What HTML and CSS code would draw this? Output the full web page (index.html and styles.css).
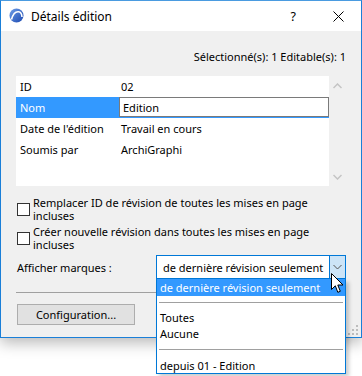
FILE: index.html
```html
<!DOCTYPE html>
<html lang="fr">
<head>
  <meta charset="UTF-8" />
  <title>Détails édition</title>
  <link rel="stylesheet" href="styles.css">
</head>
<body>
  <div class="window">
    <div class="titlebar">
      <svg class="app-icon" width="15" height="15" viewBox="0 0 15 15">
        <defs>
          <linearGradient id="ball" x1="0" y1="0" x2="1" y2="1">
            <stop offset="0" stop-color="#6f9ee8"/>
            <stop offset="1" stop-color="#1c49b0"/>
          </linearGradient>
        </defs>
        <circle cx="7.5" cy="7.5" r="7" fill="url(#ball)"/>
        <path d="M2.5 11.5 C4 6 7 3.5 9.5 3.8 C11.5 4 12.8 6 13 9" fill="none" stroke="#ffffff" stroke-width="1.6"/>
      </svg>
      <span class="title">Détails édition</span>
      <span class="help">?</span>
      <svg class="close" width="11" height="11" viewBox="0 0 11 11">
        <path d="M0.5 0.5 L10.5 10.5 M10.5 0.5 L0.5 10.5" stroke="#000" stroke-width="1"/>
      </svg>
    </div>

    <div class="content">
      <div class="stats">Sélectionné(s): 1 Editable(s): 1</div>

      <div class="listbox">
        <div class="rows">
          <div class="row"><span class="key">ID</span><span class="val">02</span></div>
          <div class="row selected"><span class="key">Nom</span><span class="val edit">Edition</span></div>
          <div class="row"><span class="key">Date de l'édition</span><span class="val">Travail en cours</span></div>
          <div class="row"><span class="key">Soumis par</span><span class="val">ArchiGraphi</span></div>
        </div>
        <div class="scrollbar">
          <svg width="9" height="6" viewBox="0 0 9 6"><path d="M0.5 5 L4.5 1 L8.5 5" fill="none" stroke="#c4c4c4" stroke-width="1.5"/></svg>
          <svg width="9" height="6" viewBox="0 0 9 6"><path d="M0.5 1 L4.5 5 L8.5 1" fill="none" stroke="#c4c4c4" stroke-width="1.5"/></svg>
        </div>
      </div>

      <div class="checks">
        <div class="check">
          <span class="box"></span>
          <span class="label">Remplacer ID de révision de toutes les mises en page<br>incluses</span>
        </div>
        <div class="check">
          <span class="box"></span>
          <span class="label">Créer nouvelle révision dans toutes les mises en page<br>incluses</span>
        </div>
      </div>

      <div class="marks">
        <span class="marks-label">Afficher marques :</span>
        <div class="combo">
          <span class="combo-text">de dernière révision seulement</span>
          <span class="combo-btn">
            <svg width="9" height="6" viewBox="0 0 9 6"><path d="M0.5 1 L4.5 5 L8.5 1" fill="none" stroke="#555" stroke-width="1"/></svg>
          </span>
        </div>
      </div>

      <div class="separator"></div>

      <div class="actions">
        <button class="btn">Configuration...</button>
        <div class="grip">
          <i class="d3"></i>
          <i class="d2"></i><i class="d3"></i>
          <i class="d1"></i><i class="d2"></i><i class="d3"></i>
        </div>
      </div>
    </div>
  </div>

  <div class="droplist">
    <div class="item active">de dernière révision seulement</div>
    <div class="divider"></div>
    <div class="item">Toutes</div>
    <div class="item">Aucune</div>
    <div class="divider low"></div>
    <div class="item last">depuis 01 - Edition</div>
  </div>

  <svg class="cursor" width="13" height="21" viewBox="0 0 13 21">
    <path d="M0.5 0.5 L0.5 16.5 L4.3 12.8 L6.8 19.3 L9.3 18.3 L6.8 12 L12 12 Z" fill="#ffffff" stroke="#000" stroke-width="1" stroke-linejoin="miter"/>
  </svg>
</body>
</html>
```

FILE: styles.css
```css
html, body {
  margin: 0;
  padding: 0;
  background-color: #ffffff;
  font-family: "Noto Sans", "Open Sans", sans-serif;
  font-size: 11px;
  color: #000000;
}

body {
  position: relative;
  width: 362px;
  height: 376px;
  overflow: hidden;
}

.window {
  width: 360px;
  height: 336px;
  border: 1px solid #1a7fd8;
  border-top-color: #4a9be0;
  display: flex;
  flex-direction: column;
  box-shadow: 0 5px 14px rgba(0, 0, 0, 0.28);
  background-color: #f0f0f0;
}

.titlebar {
  height: 30px;
  background-color: #ffffff;
  display: flex;
  align-items: center;
  flex-shrink: 0;
}

.app-icon {
  margin-left: 8px;
  margin-top: -1px;
}

.title {
  margin-left: 7px;
  font-size: 12px;
  flex: 1;
}

.help {
  font-size: 12.5px;
  margin-right: 37px;
}

.close {
  margin-right: 17px;
}

.content {
  flex: 1;
  display: flex;
  flex-direction: column;
  padding: 0 15px 0 15px;
}

.stats {
  text-align: right;
  margin-top: 19px;
  line-height: 14px;
  height: 14px;
}

.listbox {
  margin-top: 12px;
  height: 110px;
  display: flex;
}

.rows {
  flex: 1;
  background-color: #ffffff;
}

.row {
  height: 21px;
  display: flex;
  align-items: center;
}

.key {
  width: 99px;
  padding-left: 4px;
  align-self: stretch;
  display: flex;
  align-items: center;
}

.val {
  padding-left: 2px;
}

.row.selected .key {
  background-color: #3399ff;
  color: #ffffff;
}

.row.selected {
  border-bottom: 1px solid #3399ff;
  height: 20px;
}

.val.edit {
  flex: 1;
  align-self: stretch;
  box-sizing: border-box;
  border: 1px solid #7a7a7a;
  padding-left: 3px;
  display: flex;
  align-items: center;
  background-color: #ffffff;
}

.scrollbar {
  width: 17px;
  display: flex;
  flex-direction: column;
  justify-content: space-between;
  align-items: center;
  padding: 7px 0 6px 0;
}

.checks {
  margin-top: 10px;
  display: flex;
  flex-direction: column;
  gap: 3px;
}

.check {
  display: flex;
  align-items: center;
  line-height: 13px;
}

.box {
  width: 11px;
  height: 11px;
  border: 1px solid #333333;
  background-color: #ffffff;
  margin-left: 1px;
  margin-right: 3px;
  flex-shrink: 0;
}

.marks {
  margin-top: 4px;
  display: flex;
  align-items: center;
  justify-content: space-between;
}

.marks-label {
  margin-left: 1px;
}

.combo {
  width: 188px;
  height: 22px;
  border: 1px solid #0078d7;
  background-color: #ffffff;
  display: flex;
  align-items: center;
}

.combo-text {
  flex: 1;
  padding-left: 6px;
}

.combo-btn {
  width: 15px;
  align-self: stretch;
  background-color: #cce4f7;
  border-left: 1px solid #0078d7;
  display: flex;
  align-items: center;
  justify-content: center;
}

.separator {
  margin-top: 13px;
  height: 1px;
  background-color: #a0a0a0;
}

.actions {
  flex: 1;
  display: flex;
  align-items: flex-start;
  justify-content: space-between;
}

.btn {
  margin-top: 11px;
  margin-left: 1px;
  width: 118px;
  height: 21px;
  border: 1px solid #adadad;
  background-color: #e1e1e1;
  font-family: inherit;
  font-size: 11px;
  color: #000000;
  padding: 0;
}

.grip {
  align-self: flex-end;
  margin-right: -12px;
  margin-bottom: 2px;
  display: grid;
  grid-template-columns: repeat(3, 2px);
  grid-template-rows: repeat(3, 2px);
  gap: 2px;
}

.grip i {
  width: 2px;
  height: 2px;
  background-color: #bdbdbd;
}

.grip .d1 { grid-column: 1; }
.grip .d2 { grid-column: 2; }
.grip .d3 { grid-column: 3; }

.droplist {
  position: absolute;
  left: 156px;
  top: 279px;
  width: 188px;
  border: 1px solid #0078d7;
  border-top: none;
  background-color: #ffffff;
  box-shadow: 3px 3px 4px rgba(0, 0, 0, 0.2);
}

.item {
  height: 16px;
  line-height: 16px;
  padding-left: 3px;
}

.item.active {
  height: 17px;
  line-height: 17px;
  background-color: #3399ff;
  color: #ffffff;
}

.item.last {
  height: 15px;
  line-height: 15px;
}

.divider {
  height: 1px;
  background-color: #a0a0a0;
  margin: 6px 2px 7px 2px;
}

.divider.low {
  margin: 7px 2px 8px 2px;
}

.cursor {
  position: absolute;
  left: 331px;
  top: 273px;
}
```
